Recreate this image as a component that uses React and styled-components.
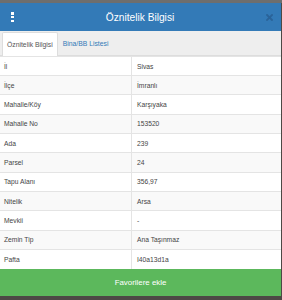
import React from 'react';
import styled, { createGlobalStyle } from 'styled-components';

const GlobalStyle = createGlobalStyle`
  html, body {
    margin: 0;
    padding: 0;
    background: #57524e;
    font-family: "Liberation Sans", Arial, sans-serif;
  }
`;

const rows = [
  ['İl', 'Sivas'],
  ['İlçe', 'İmranlı'],
  ['Mahalle/Köy', 'Karşıyaka'],
  ['Mahalle No', '153520'],
  ['Ada', '239'],
  ['Parsel', '24'],
  ['Tapu Alanı', '356,97'],
  ['Nitelik', 'Arsa'],
  ['Mevkii', '-'],
  ['Zemin Tip', 'Ana Taşınmaz'],
  ['Pafta', 'I40a13d1a'],
];

const Page = styled.div`
  width: 282px;
  height: 300px;
  overflow: hidden;
  background: linear-gradient(#6e6e6e 0 3px, #4d4845 3px);
`;

const Dialog = styled.div`
  margin-top: 3px;
  width: 281px;
  height: 293px;
  background: #fff;
  display: flex;
  flex-direction: column;
`;

const Header = styled.div`
  height: 29px;
  background: #337ab7;
  display: flex;
  align-items: center;
  justify-content: space-between;
  padding: 0 8px 0 11px;
  color: #fff;
`;

const Title = styled.div`
  font-size: 10.2px;
  flex: 1;
  text-align: center;
`;

const Kebab = styled.div`
  width: 3px;
  display: flex;
  flex-direction: column;
  gap: 1.5px;
  span {
    display: block;
    width: 3px;
    height: 2.3px;
    background: #fff;
  }
`;

const TabBar = styled.div`
  height: 24px;
  background: #eeeeee;
  display: flex;
  align-items: flex-end;
  padding-left: 2px;
  border-bottom: 1px solid #ddd;
`;

const Tab = styled.div`
  height: ${p => (p.$active ? '23px' : '22px')};
  display: flex;
  align-items: center;
  padding: 0 4px;
  font-size: 6.8px;
  color: ${p => (p.$active ? '#555' : '#337ab7')};
  background: ${p => (p.$active ? '#fff' : 'transparent')};
  border: 1px solid ${p => (p.$active ? '#ddd' : 'transparent')};
  border-bottom: none;
  border-radius: 2px 2px 0 0;
  margin-bottom: ${p => (p.$active ? '-1px' : '0')};
`;

const Table = styled.table`
  width: 100%;
  border-collapse: collapse;
  flex: 1;
`;

const Row = styled.tr`
  background: ${p => (p.$striped ? '#f9f9f9' : '#fff')};
  height: 19.3px;
`;

const Cell = styled.td`
  padding: 0 0 0 ${p => (p.$value ? '5px' : '4px')};
  border-top: 1px solid #e4e4e4;
  border-left: ${p => (p.$value ? '1px solid #e4e4e4' : 'none')};
  width: ${p => (p.$value ? 'auto' : '127px')};
  font-size: 6.7px;
  color: #444;
  vertical-align: middle;
`;

const Button = styled.div`
  height: 28px;
  background: #5cb85c;
  color: #fff;
  font-size: 7.9px;
  display: flex;
  align-items: center;
  justify-content: center;
`;

const CloseIcon = () => (
  <svg width="7" height="7" viewBox="0 0 7 7">
    <path d="M1 1L6 6M6 1L1 6" stroke="#2a6399" strokeWidth="1.8" strokeLinecap="square" />
  </svg>
);

export default function App() {
  return (
    <>
      <GlobalStyle />
      <Page>
        <Dialog>
          <Header>
            <Kebab><span /><span /><span /></Kebab>
            <Title>Öznitelik Bilgisi</Title>
            <CloseIcon />
          </Header>
          <TabBar>
            <Tab $active>Öznitelik Bilgisi</Tab>
            <Tab>Bina/BB Listesi</Tab>
          </TabBar>
          <Table>
            <tbody>
              {rows.map(([k, v], i) => (
                <Row key={k} $striped={i % 2 === 1}>
                  <Cell>{k}</Cell>
                  <Cell $value>{v}</Cell>
                </Row>
              ))}
            </tbody>
          </Table>
          <Button>Favorilere ekle</Button>
        </Dialog>
      </Page>
    </>
  );
}
